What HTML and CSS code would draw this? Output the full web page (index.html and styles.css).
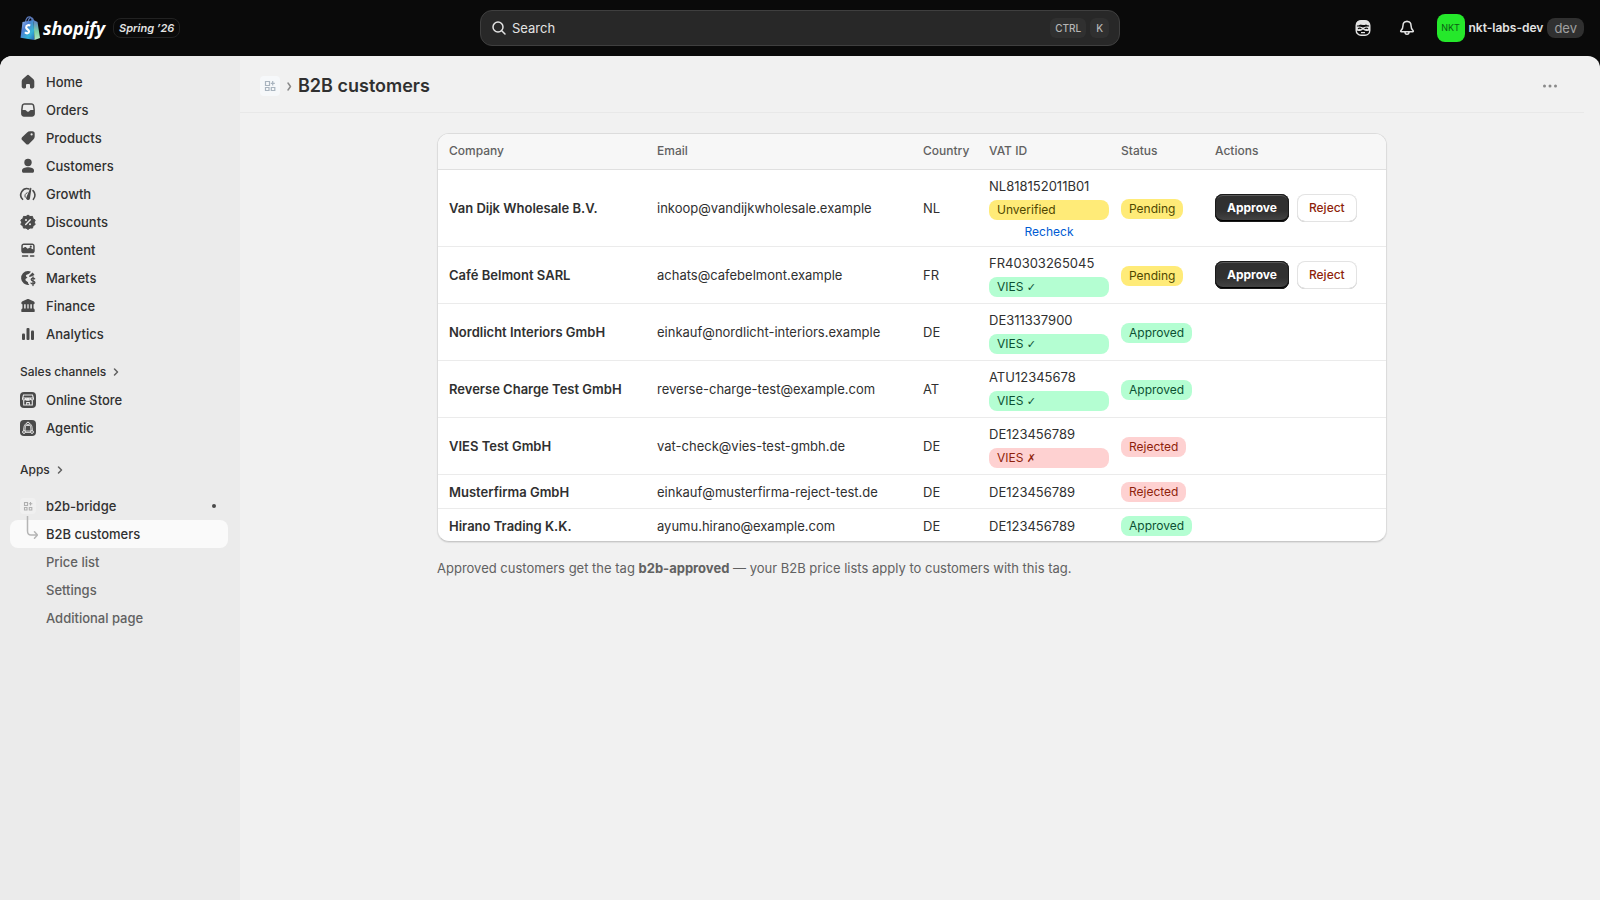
FILE: index.html
```
<!DOCTYPE html>
<html lang="en">

<head>
    <meta charset="utf-8">
    <meta name="viewport" content="width=device-width, initial-scale=1">
    <link rel="stylesheet" href="styles.css">
    <title>B2B customers</title>
</head>

<body>
    <header class="topbar">
        <div class="brand">
            <a href="#" class="logo">
                <svg class="bag" width="22" height="24" viewBox="0 0 22 24">
                    <defs>
                        <linearGradient id="bagFill" x1="0" y1="0" x2="1" y2="1">
                            <stop offset="0" stop-color="#a7c4ee" />
                            <stop offset=".35" stop-color="#4d7ed0" />
                            <stop offset=".7" stop-color="#35b5d8" />
                            <stop offset="1" stop-color="#2a63b8" />
                        </linearGradient>
                        <linearGradient id="bagSide" x1="0" y1="0" x2="0" y2="1">
                            <stop offset="0" stop-color="#5c7fc9" />
                            <stop offset=".6" stop-color="#7ed3a8" />
                            <stop offset="1" stop-color="#b5e6c0" />
                        </linearGradient>
                    </defs>
                    <path d="M5.500 6C6 2.500 8 .8 9.500.8s2.500 1.500 2.700 4.500M8 5.500C8.500 3 10 1.300 11.500 1.800s2 2 2 3.700" fill="none" stroke="#5a78b8" stroke-width="1.200" />
                    <path d="M2.500 6 13.500 4 14.500 24 .5 21.800z" fill="url(#bagFill)" />
                    <path d="M13.500 4 17.500 6l2.500 16-5.500 2z" fill="url(#bagSide)" />
                    <path d="M10.200 9.600c-1-.6-4-.8-4 1.800 0 2 3 2.100 2.800 4.300-.2 2-2.600 2-4 .6" fill="none" stroke="#fff" stroke-width="2.200" />
                </svg>
                <span class="wordmark">shopify</span>
            </a>
            <a href="#" class="edition">Spring ’26</a>
        </div>

        <button class="search" type="button">
            <svg width="16" height="16" viewBox="0 0 16 16" fill="none" stroke="#e3e3e3" stroke-width="1.500" stroke-linecap="round">
                <circle cx="7" cy="7" r="5" />
                <path d="m11 11 3 3" />
            </svg>
            <span>Search</span>
            <kbd>CTRL</kbd>
            <kbd>K</kbd>
        </button>

        <div class="account">
            <button class="icon-button" type="button" aria-label="Sidekick">
                <svg width="20" height="20" viewBox="0 0 20 20">
                    <rect x="3.200" y="2.800" width="13.600" height="14.400" rx="4.800" fill="none" stroke="#e3e3e3" stroke-width="1.400" />
                    <path d="M3 7.600V6.500C3 4 5 2.500 7 2.500h6c2.500 0 4 2 4 5-1.600.1-3-.2-4-.9-2 .9-3.500.4-5.500.2 1-.5 2-.8 3-.9-2.500-.2-3.700 1.600-7.500 1.700z" fill="#e3e3e3" />
                    <path d="M3 8.800c2.500-.6 4.500-.4 7 .6 2.500-1 4.500-1.200 7-.6v3.700c-2.400.9-4.800.6-7-1.100-2.200 1.700-4.600 2-7 1.100z" fill="#e3e3e3" />
                    <path d="M5 10.700q1.700-1.100 3.400 0M11.600 10.700q1.700-1.100 3.400 0" fill="none" stroke="#0a0a0a" stroke-width="1.300" />
                    <path d="M8 14.600h4" stroke="#e3e3e3" stroke-width="1.200" />
                </svg>
            </button>
            <button class="icon-button" type="button" aria-label="Notifications">
                <svg width="20" height="20" viewBox="0 0 20 20" fill="none" stroke="#e3e3e3" stroke-width="1.500" stroke-linejoin="round">
                    <path d="M10 3.500c-2.500 0-4 1.800-4 4 0 3-1 4-2 5-.6.6-.4 1.300.4 1.300h11.200c.8 0 1-.7.4-1.300-1-1-2-2-2-5 0-2.200-1.500-4-4-4z" />
                    <path d="M8 14c0 1.500.8 2.300 2 2.300s2-.8 2-2.300M10 3.500V2.800" />
                </svg>
            </button>
            <button class="store" type="button">
                <span class="avatar">NKT</span>
                <span class="store-name">nkt-labs-dev</span>
                <span class="store-tag">dev</span>
            </button>
        </div>
    </header>

    <div class="frame">
        <nav class="sidebar">
            <ul class="nav-list">
                <li><a href="#">
                    <svg viewBox="0 0 20 20"><path d="M8.800 3.400a1.800 1.800 0 0 1 2.400 0l4 3.700c.7.6 1.100 1.500 1.100 2.400v5c0 1.100-.8 1.900-1.900 1.900h-1.200c-.7 0-1.200-.5-1.200-1.200v-2c0-.7-.5-1.200-1.200-1.200H9.200c-.7 0-1.200.5-1.200 1.200v2c0 .7-.5 1.200-1.200 1.200H5.600c-1.100 0-1.900-.8-1.900-1.900v-5c0-.9.4-1.800 1.100-2.400z" /></svg>
                    Home</a></li>
                <li><a href="#">
                    <svg viewBox="0 0 20 20"><path fill-rule="evenodd" d="M6.500 3.300h7c1.500 0 2.700 1 2.900 2.500l.5 4v4c0 1.600-1.200 2.900-2.900 2.900H6c-1.700 0-2.900-1.300-2.900-2.900v-4l.5-4c.2-1.500 1.400-2.500 2.900-2.500zm0 1.500c-.7 0-1.300.5-1.400 1.200l-.5 4h2.500c.6 0 1 .3 1.300.8.3.6.8.9 1.600.9s1.300-.3 1.600-.9c.3-.5.7-.8 1.300-.8h2.500l-.5-4c-.1-.7-.7-1.200-1.400-1.200z" /></svg>
                    Orders</a></li>
                <li><a href="#">
                    <svg viewBox="0 0 20 20"><path fill-rule="evenodd" d="M12 3.300h2.500c1.300 0 2.200 1 2.200 2.200v3c0 1-.4 2-1.100 2.700l-4.700 4.800c-.8.800-2 .8-2.800 0l-4-4c-.8-.8-.8-2 0-2.800l5-4.800c.8-.7 1.800-1.100 2.900-1.100zm1.600 4.200a1.100 1.100 0 1 0 0-2.200 1.100 1.100 0 0 0 0 2.200z" /></svg>
                    Products</a></li>
                <li><a href="#">
                    <svg viewBox="0 0 20 20"><circle cx="10" cy="6.500" r="3.700" /><path d="M4 14.500c0-2 3-3.200 6-3.200s6 1.200 6 3.200v.8c0 .9-.6 1.500-1.500 1.500h-9c-.9 0-1.500-.6-1.500-1.500z" /></svg>
                    Customers</a></li>
                <li><a href="#">
                    <svg viewBox="0 0 20 20"><path d="M4.600 15.300A6.300 6.300 0 0 1 11 4.900M15 6.600a6.300 6.300 0 0 1 .4 8.700" fill="none" stroke="#4a4a4a" stroke-width="1.600" stroke-linecap="round" /><path d="M7.200 13.200a3.400 3.400 0 0 1 2-4.400" fill="none" stroke="#4a4a4a" stroke-width="1" stroke-linecap="round" /><path d="M13.400 4.600 12 14.300a1.900 1.900 0 1 1-3.500-1.200l3.700-8.900c.3-.7 1.300-.4 1.200.4z" /></svg>
                    Growth</a></li>
                <li><a href="#">
                    <svg viewBox="0 0 20 20"><path d="m10 3 2 1.500 2.500-.1.600 2.400L17.200 8l-.9 2.300.9 2.200-2.100 1.300-.6 2.300-2.500-.1-2 1.500-2-1.500-2.500.1-.6-2.300-2.100-1.300.9-2.200L2.800 8l2.100-1.200.6-2.400 2.500.1z" stroke="#4a4a4a" stroke-linejoin="round" /><path d="m7.700 12.500 4.600-4.800" stroke="#ebebeb" stroke-width="1.400" stroke-linecap="round" /><circle cx="8" cy="8" r="1" fill="#ebebeb" /><circle cx="12" cy="12.200" r="1" fill="#ebebeb" /></svg>
                    Discounts</a></li>
                <li><a href="#">
                    <svg viewBox="0 0 20 20"><path fill-rule="evenodd" d="M5.800 3.500h8.400c1.400 0 2.500 1 2.500 2.400v5c0 1.400-1.100 2.400-2.500 2.400H5.800c-1.400 0-2.500-1-2.500-2.400v-5c0-1.400 1.100-2.400 2.500-2.400zm0 1.400c-.6 0-1 .4-1 1v2.400l1.700-1c.6-.4 1.200-.3 1.700.1l1.500 1.300 1.300-.7c.6-.4 1.200-.3 1.700.1l2.500 1.500V5.900c0-.6-.4-1-1-1zm7 2.800a1 1 0 1 0 0-2.100 1 1 0 0 0 0 2.100z" /><path d="M4.500 16h5.200M12.500 16h3.300" stroke="#4a4a4a" stroke-width="1.400" stroke-linecap="round" /></svg>
                    Content</a></li>
                <li><a href="#">
                    <svg viewBox="0 0 20 20"><path d="M10 3a7 7 0 1 0 1.300 13.900c-.8-.7-1.300-1.600-1.300-2.600l-2-1.500c-.8-.6-.7-1.600 0-2.200l1.500-.8-1.300-1.300c-.6-.6-.3-1.500.5-1.800L11 5.800l2-2.100C12 3.200 11 3 10 3z" /><path d="M14.500 4.500c.9.700 1.600 1.600 2 2.600l-3.200 1.400-1.800.5-.5-1z" /><path d="M16.700 10.800c-.8-1-3.500-1-3.500.8s3.700 1 3.700 2.900c0 1.800-3 1.800-3.900.6M15 9v8.500" fill="none" stroke="#4a4a4a" stroke-width="1.300" stroke-linecap="round" /></svg>
                    Markets</a></li>
                <li><a href="#">
                    <svg viewBox="0 0 20 20"><path d="M9 3.200c.6-.3 1.400-.3 2 0l4.500 2c.8.400 1.200 1 1.200 1.700 0 .8-.6 1.400-1.400 1.400H4.700c-.8 0-1.400-.6-1.400-1.400 0-.7.400-1.300 1.200-1.700z" /><path d="M5.300 8v5M8.500 8v5M11.500 8v5M14.700 8v5" stroke="#4a4a4a" stroke-width="1.700" /><path d="M4.500 12.500h11c.7 0 1.200.8 1.200 1.700v1c0 .5-.4.900-.9.900H4.200c-.5 0-.9-.4-.9-.9v-1c0-.9.5-1.700 1.200-1.700z" /></svg>
                    Finance</a></li>
                <li><a href="#">
                    <svg viewBox="0 0 20 20"><rect x="4" y="9.500" width="3" height="6.500" rx="1" /><rect x="8.500" y="4" width="3" height="12" rx="1" /><rect x="13" y="6.500" width="3" height="9.500" rx="1" /></svg>
                    Analytics</a></li>
            </ul>

            <a href="#" class="section">Sales channels
                <svg width="12" height="12" viewBox="0 0 12 12"><path d="m4.500 3 3 3-3 3" /></svg></a>
            <ul class="nav-list">
                <li><a href="#">
                    <svg viewBox="0 0 20 20"><rect x="2" y="2" width="16" height="16" rx="4" /><path d="M5.500 5h9l1 3.500c0 2-2.300 2-3 .5-.8 1.500-3 1.500-3.500 0h1.800C10 10.500 8 10.500 7.500 9c-.8 1.500-3 1.300-3-.5zM5 8h10M5.700 10.300V15h8.600v-4.700M8.700 15v-2.500h2.600V15" fill="none" stroke="#ebebeb" stroke-width="1.100" /></svg>
                    Online Store</a></li>
                <li><a href="#">
                    <svg viewBox="0 0 20 20"><rect x="2" y="2" width="16" height="16" rx="4" /><g fill="none" stroke="#ebebeb"><path d="M8.600 5.800C6.500 6 5.800 8 5.800 12.600M11.400 5.800c2.100.2 2.800 2.200 2.800 6.800M7.500 14.300h5" /><path d="M7.500 7.500h5l.5 5.500H7z" stroke-width=".8" /><circle cx="10" cy="5.600" r="1.400" /><circle cx="6" cy="14" r="1.400" /><circle cx="14" cy="14" r="1.400" /></g></svg>
                    Agentic</a></li>
            </ul>

            <a href="#" class="section apps">Apps
                <svg width="12" height="12" viewBox="0 0 12 12"><path d="m4.500 3 3 3-3 3" /></svg></a>
            <ul class="nav-list">
                <li><a href="#">
                    <svg viewBox="0 0 20 20"><rect x="2" y="2" width="16" height="16" rx="4" fill="#f0f0f0" /><path d="M6.500 6.500h3v3h-3zM6.500 11.500h2.500v2.500H6.500zM11.300 11.500h2.500v2.500h-2.500zM12.500 6v3.500M10.800 7.800h3.500" fill="none" stroke="#b0b0b0" stroke-width="1.100" /></svg>
                    b2b-bridge <span class="dot"></span></a></li>
                <li><a href="#" class="sub current" aria-current="page">
                    <svg class="branch" viewBox="0 0 20 28"><path d="M9.500 0v15c0 2.500 1 4 3.500 4h6M16.500 15.800l3 3.200-3 3.200" /></svg>
                    B2B customers</a></li>
                <li><a href="#" class="sub">Price list</a></li>
                <li><a href="#" class="sub">Settings</a></li>
                <li><a href="#" class="sub">Additional page</a></li>
            </ul>
        </nav>

        <main class="page">
            <div class="page-header">
                <svg width="20" height="20" viewBox="0 0 20 20"><rect width="20" height="20" rx="4" fill="#f6f8fa" /><path d="M5.500 5.500h4v4h-4zM5.500 11.500h3.500v3H5.500zM11.300 11.500h3.500v3h-3.500zM12.700 5v4.500M10.800 7.300h4" fill="none" stroke="#a9b4bf" stroke-width="1.200" /></svg>
                <svg class="crumb" width="10" height="12" viewBox="0 0 10 12"><path d="m4 3 2.500 3.500L4 10" /></svg>
                <h1>B2B customers</h1>
                <button class="more" type="button" aria-label="More actions">
                    <svg width="20" height="20" viewBox="0 0 20 20"><circle cx="4.500" cy="10" r="1.500" /><circle cx="10" cy="10" r="1.500" /><circle cx="15.500" cy="10" r="1.500" /></svg>
                </button>
            </div>

            <div class="content">
                <div class="card">
                    <table>
                        <colgroup>
                            <col class="col-company">
                            <col class="col-email">
                            <col class="col-country">
                            <col class="col-vat">
                            <col class="col-status">
                            <col>
                        </colgroup>
                        <thead>
                            <tr>
                                <th>Company</th>
                                <th>Email</th>
                                <th>Country</th>
                                <th>VAT ID</th>
                                <th>Status</th>
                                <th>Actions</th>
                            </tr>
                        </thead>
                        <tbody>
                            <tr>
                                <td>Van Dijk Wholesale B.V.</td>
                                <td>inkoop@vandijkwholesale.example</td>
                                <td>NL</td>
                                <td>
                                    <div class="vat">NL818152011B01
                                        <span class="badge warning">Unverified</span>
                                        <button class="recheck" type="button">Recheck</button>
                                    </div>
                                </td>
                                <td><span class="badge warning">Pending</span></td>
                                <td>
                                    <div class="actions">
                                        <button class="btn approve" type="button">Approve</button>
                                        <button class="btn reject" type="button">Reject</button>
                                    </div>
                                </td>
                            </tr>
                            <tr>
                                <td>Café Belmont SARL</td>
                                <td>achats@cafebelmont.example</td>
                                <td>FR</td>
                                <td>
                                    <div class="vat">FR40303265045
                                        <span class="badge success">VIES <span class="mark">✓</span></span>
                                    </div>
                                </td>
                                <td><span class="badge warning">Pending</span></td>
                                <td>
                                    <div class="actions">
                                        <button class="btn approve" type="button">Approve</button>
                                        <button class="btn reject" type="button">Reject</button>
                                    </div>
                                </td>
                            </tr>
                            <tr>
                                <td>Nordlicht Interiors GmbH</td>
                                <td>einkauf@nordlicht-interiors.example</td>
                                <td>DE</td>
                                <td>
                                    <div class="vat">DE311337900
                                        <span class="badge success">VIES <span class="mark">✓</span></span>
                                    </div>
                                </td>
                                <td><span class="badge success">Approved</span></td>
                                <td></td>
                            </tr>
                            <tr>
                                <td>Reverse Charge Test GmbH</td>
                                <td>reverse-charge-test@example.com</td>
                                <td>AT</td>
                                <td>
                                    <div class="vat">ATU12345678
                                        <span class="badge success">VIES <span class="mark">✓</span></span>
                                    </div>
                                </td>
                                <td><span class="badge success">Approved</span></td>
                                <td></td>
                            </tr>
                            <tr>
                                <td>VIES Test GmbH</td>
                                <td>vat-check@vies-test-gmbh.de</td>
                                <td>DE</td>
                                <td>
                                    <div class="vat">DE123456789
                                        <span class="badge critical">VIES <span class="mark">✗</span></span>
                                    </div>
                                </td>
                                <td><span class="badge critical">Rejected</span></td>
                                <td></td>
                            </tr>
                            <tr>
                                <td>Musterfirma GmbH</td>
                                <td>einkauf@musterfirma-reject-test.de</td>
                                <td>DE</td>
                                <td>DE123456789</td>
                                <td><span class="badge critical">Rejected</span></td>
                                <td></td>
                            </tr>
                            <tr>
                                <td>Hirano Trading K.K.</td>
                                <td>ayumu.hirano@example.com</td>
                                <td>DE</td>
                                <td>DE123456789</td>
                                <td><span class="badge success">Approved</span></td>
                                <td></td>
                            </tr>
                        </tbody>
                    </table>
                </div>
                <p class="hint">Approved customers get the tag <strong>b2b-approved</strong> — your B2B price lists apply to customers with this tag.</p>
            </div>
        </main>
    </div>
</body>

</html>
```
FILE: styles.css
```
* {
    box-sizing: border-box;
}

body {
    margin: 0;
    min-height: 100vh;
    display: flex;
    flex-direction: column;
    background: #0a0a0a;
    color: #303030;
    font-family: Inter, sans-serif;
    font-size: 13px;
    line-height: 20px;
}

a {
    color: inherit;
    text-decoration: none;
}

button {
    font: inherit;
    color: inherit;
    background: none;
    border: none;
    padding: 0;
    cursor: pointer;
}

svg {
    flex: none;
}

/* top bar */
.topbar {
    display: grid;
    grid-template-columns: 1fr 640px 1fr;
    align-items: center;
    height: 56px;
    padding: 0 16px;
    color: #e3e3e3;
}

.brand,
.logo {
    display: flex;
    align-items: center;
}

.brand {
    gap: 8px;
    padding-left: 4px;
}

.logo {
    gap: 1px;
}

.wordmark {
    color: #fff;
    font-family: "Open Sans", sans-serif;
    font-size: 18px;
    font-style: italic;
    font-weight: 700;
}

.edition {
    border: 1px solid #222;
    border-radius: 8px;
    padding: 0 5px;
    font-size: 11px;
    line-height: 18px;
    font-style: italic;
    font-weight: 600;
}

.search {
    display: flex;
    align-items: center;
    gap: 4px;
    height: 36px;
    padding: 0 10px;
    border: 1px solid #3f3f3f;
    border-radius: 12px;
    background: #282828;
    text-align: left;
}

.search span {
    flex: 1;
    padding-left: 1px;
    font-size: 13px;
}

.search kbd {
    padding: 0 5px;
    border-radius: 6px;
    background: #303030;
    color: #b5b5b5;
    font-family: inherit;
    font-size: 10px;
    font-weight: 550;
}

.search kbd:last-child {
    padding: 0 6px;
}

.account {
    display: flex;
    align-items: center;
    justify-content: flex-end;
}

.icon-button {
    display: flex;
    margin-right: 24px;
}

.icon-button + .store {
    margin-left: -4px;
}

.store {
    display: flex;
    align-items: center;
    gap: 4px;
}

.avatar {
    width: 28px;
    border-radius: 8px;
    background: #25e82b;
    color: #0b5c14;
    font-size: 9px;
    line-height: 28px;
    text-align: center;
}

.store-name {
    font-size: 12px;
    font-weight: 600;
}

.store-tag {
    padding: 0 7px;
    border-radius: 8px;
    background: #303030;
    color: #a0a0a0;
}

/* frame */
.frame {
    flex: 1;
    display: grid;
    grid-template-columns: 240px 1fr;
    border-radius: 12px 12px 0 0;
    overflow: hidden;
    background: #f1f1f1;
}

.sidebar {
    padding: 12px 12px 12px 10px;
    background: #ebebeb;
}

.nav-list {
    margin: 0;
    padding: 0;
    list-style: none;
}

.nav-list a {
    display: flex;
    align-items: center;
    gap: 8px;
    height: 28px;
    padding: 0 12px 0 8px;
    border-radius: 8px;
    font-weight: 550;
}

.nav-list svg {
    width: 20px;
    height: 20px;
    fill: #4a4a4a;
}

.nav-list .sub {
    padding-left: 36px;
    color: #616161;
    font-weight: 450;
}

.nav-list .current {
    padding-left: 8px;
    background: #fafafa;
    color: #303030;
    font-weight: 550;
}

.nav-list .branch {
    height: 28px;
    margin-top: -8px;
    fill: none;
    stroke: #b5b5b5;
    stroke-width: 1.5;
    stroke-linecap: round;
}

.dot {
    width: 4px;
    height: 4px;
    margin-left: auto;
    border-radius: 50%;
    background: #4a4a4a;
}

.section {
    display: flex;
    align-items: center;
    gap: 4px;
    height: 28px;
    margin: 10px 0 0 10px;
    font-size: 12px;
    font-weight: 550;
}

.section.apps {
    margin: 14px 0 8px 10px;
}

.section svg,
.crumb {
    fill: none;
    stroke: #616161;
    stroke-width: 1.5;
    stroke-linecap: round;
    stroke-linejoin: round;
}

.crumb {
    stroke: #8a8a8a;
}

/* page */
.page {
    padding-right: 16px;
}

.page-header {
    display: flex;
    align-items: center;
    gap: 4px;
    height: 57px;
    padding: 4px 24px 0 20px;
    border-bottom: 1px solid #e8e8e8;
}

.page-header h1 {
    margin: 0;
    font-size: 18px;
    font-weight: 570;
}

.more {
    display: flex;
    margin-left: auto;
    fill: #8a8a8a;
}

.content {
    max-width: 950px;
    margin: 20px auto;
}

.card {
    overflow: hidden;
    border: 1px solid #dcdcdc;
    border-bottom-color: #c8c8c8;
    border-radius: 12px;
    background: #fff;
    box-shadow: 0 1px 1px #dedede;
}

table {
    width: 100%;
    table-layout: fixed;
    border-spacing: 0;
}

.col-company {
    width: 213px;
}

.col-email {
    width: 266px;
}

.col-country {
    width: 66px;
}

.col-vat {
    width: 132px;
}

.col-status {
    width: 94px;
}

th,
td {
    padding: 6px;
    border-bottom: 1px solid #ebebeb;
    text-align: left;
}

th {
    height: 36px;
    padding-bottom: 8px;
    border-color: #e0e0e0;
    background: #f7f7f7;
    color: #616161;
    font-size: 12px;
    font-weight: 550;
}

th:first-child,
td:first-child {
    padding-left: 11px;
}

td:first-child {
    font-weight: 600;
}

tbody tr:last-child td {
    padding-bottom: 5px;
    border-bottom: none;
}

.vat {
    display: flex;
    flex-direction: column;
    gap: 4px;
}

.badge {
    display: block;
    width: fit-content;
    padding: 0 8px;
    border-radius: 8px;
    font-size: 12px;
    line-height: 20px;
}

td > .badge {
    margin-top: 1px;
}

.vat .badge {
    width: auto;
    height: 20px;
}

.mark {
    font-family: "DejaVu Sans", sans-serif;
    font-size: 11px;
}

.warning {
    background: #ffeb78;
    color: #4f4700;
}

.success {
    background: #b4fed2;
    color: #0c5132;
}

.critical {
    background: #fed1d1;
    color: #8e1f0b;
}

.recheck {
    color: #005bd3;
    font-size: 12px;
    line-height: 16px;
}

.actions {
    display: flex;
    gap: 8px;
}

.btn {
    height: 28px;
    padding: 0 12px;
    border-radius: 8px;
    font-size: 12px;
}

.approve {
    background: linear-gradient(#303030 60%, #474747);
    box-shadow: inset 0 0 0 1px #1a1a1a, inset 0 2px 0 #5a5a5a, inset 0 -2px 0 #000;
    color: #fff;
    font-weight: 650;
}

.reject {
    background: #fff;
    box-shadow: inset 0 0 0 1px #e3e3e3, inset 0 -1px 0 #b5b5b5;
    color: #8e1f0b;
    font-weight: 550;
}

.hint {
    margin: 16px 0 0;
    color: #616161;
}
```
